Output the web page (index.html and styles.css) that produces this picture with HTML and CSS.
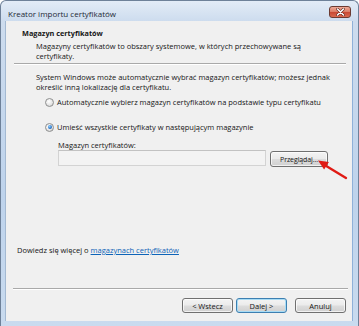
FILE: index.html
```html
<!DOCTYPE html>
<html lang="pl">

<head>
    <meta charset="UTF-8" />
    <title>Kreator importu certyfikatów</title>
    <link rel="stylesheet" href="styles.css">
</head>
<body>
    <div class="window">
        <div class="titlebar">
            <span class="title">Kreator importu certyfikatów</span>
            <button class="close-button">
                <svg width="9" height="8" viewBox="0 0 9 8">
                    <path d="M1.5 1l6 6M7.5 1l-6 6" stroke="#5a2018" stroke-width="2.6" stroke-linecap="round"></path>
                    <path d="M1.5 1l6 6M7.5 1l-6 6" stroke="#ffffff" stroke-width="1.6" stroke-linecap="round"></path>
                </svg>
            </button>
        </div>

        <div class="client">
            <div class="header">
                <h2>Magazyn certyfikatów</h2>
                <p>Magazyny certyfikatów to obszary systemowe, w których przechowywane są<br>certyfikaty.</p>
            </div>
            <div class="separator"></div>

            <div class="options">
                <p class="intro">System Windows może automatycznie wybrać magazyn certyfikatów; możesz jednak<br>określić inną lokalizację dla certyfikatu.</p>
                <label class="radio">
                    <span class="radio-circle"></span>
                    Automatycznie wybierz magazyn certyfikatów na podstawie typu certyfikatu
                </label>
                <label class="radio radio-second">
                    <span class="radio-circle checked"></span>
                    Umieść wszystkie certyfikaty w następującym magazynie
                </label>
                <div class="store">
                    <div class="store-label">Magazyn certyfikatów:</div>
                    <div class="store-row">
                        <div class="store-input"></div>
                        <button class="button browse-button">Przeglądaj...</button>
                        <svg class="arrow" width="45" height="30" viewBox="0 0 45 30">
                            <line x1="15" y1="9.3" x2="36" y2="22" stroke="#e01a14" stroke-width="2.4" stroke-linecap="round"></line>
                            <polygon points="8,4.5 14.1,13.6 18.9,6" fill="#e01a14"></polygon>
                        </svg>
                    </div>
                </div>
            </div>

            <p class="learn-more">Dowiedz się więcej o <a href="#">magazynach certyfikatów</a></p>

            <div class="footer">
                <div class="separator"></div>
                <div class="button-group">
                    <button class="button">&lt; Wstecz</button>
                    <button class="button next-button">Dalej &gt;</button>
                    <button class="button cancel-button">Anuluj</button>
                </div>
            </div>
        </div>
    </div>
</body>
</html>
```

FILE: styles.css
```css
body {
    margin: 0;
    padding: 0;
    background: #ffffff;
    font-family: 'Open Sans', sans-serif;
    font-size: 7.5px;
    color: #161616;
}

.window {
    width: 359px;
    height: 326px;
    box-sizing: border-box;
    border: 1px solid #6e8199;
    border-bottom: none;
    border-radius: 6px 6px 0 0;
    padding: 0 6px 5px 5px;
    display: flex;
    flex-direction: column;
    background: linear-gradient(180deg, #e3ecf7 0, #cddcee 20px, #bed3ec 60%, #c9dbef 100%);
}

.titlebar {
    height: 20px;
    display: flex;
    align-items: flex-start;
    justify-content: space-between;
}

.title {
    margin: 7px 0 0 2px;
    line-height: 12px;
    font-size: 8px;
    color: #1e2a36;
}

.close-button {
    width: 22px;
    height: 12px;
    margin: 5px 1px 0 0;
    padding: 0;
    border: 1px solid #6b3b32;
    border-radius: 3px;
    background: linear-gradient(180deg, #eeaa98 0, #dd7f68 45%, #c94a34 55%, #d9694f 100%);
    display: flex;
    align-items: center;
    justify-content: center;
}

.client {
    flex-grow: 1;
    display: flex;
    flex-direction: column;
    background: #f0f0f0;
    box-shadow: -1px 0 0 #a3b9d2, 1px 0 0 #8fb1d9;
}

.header {
    padding: 7px 0 2px 16px;
}

.header h2 {
    margin: 0 0 3px;
    font-size: 7.3px;
    font-weight: 700;
    line-height: 10px;
}

.header p {
    margin: 0 0 0 14px;
    line-height: 10px;
}

.separator {
    height: 0;
    border-top: 1px solid #a9a9a9;
    border-bottom: 1px solid #ffffff;
    margin: 0 6px 0 8px;
}

.options {
    padding-left: 30px;
}

.intro {
    margin: 7px 0 0;
    line-height: 10px;
}

.radio {
    display: flex;
    align-items: center;
    margin: 5px 0 0 9px;
    line-height: 10px;
}

.radio-second {
    margin-top: 15px;
}

.radio-circle {
    width: 7px;
    height: 7px;
    margin-right: 3px;
    border: 1px solid #8e8f8f;
    border-radius: 50%;
    background: radial-gradient(circle at 40% 35%, #ffffff 0, #e6e6e6 55%, #c9c9c9 100%);
    position: relative;
}

.radio-circle.checked::after {
    content: '';
    position: absolute;
    left: 1.5px;
    top: 1.5px;
    width: 4px;
    height: 4px;
    border-radius: 50%;
    background: radial-gradient(circle at 40% 35%, #8fd0ff 0, #2a74c8 60%, #144a8c 100%);
}

.store {
    margin: 8px 0 0 22px;
}

.store-label {
    line-height: 10px;
}

.store-row {
    display: flex;
    align-items: flex-start;
    position: relative;
}

.store-input {
    width: 206px;
    height: 14px;
    border: 1px solid #d3d3d3;
    border-top-color: #c2c2c2;
    background: #f3f3f3;
}

.arrow {
    position: absolute;
    left: 252px;
    top: 6px;
}

.button {
    height: 16px;
    padding: 0;
    border: 1px solid #707070;
    border-radius: 3px;
    background: linear-gradient(180deg, #f4f4f4 0, #ebebeb 48%, #dddddd 52%, #d0d0d0 100%);
    font-family: 'Open Sans', sans-serif;
    font-size: 7.5px;
    color: #161616;
    white-space: nowrap;
    box-shadow: inset 0 0 0 1px rgba(255, 255, 255, 0.7);
}

.browse-button {
    width: 58px;
    margin: 1px 0 0 4px;
    font-size: 7px;
    letter-spacing: -0.1px;
}

.learn-more {
    margin: 78px 0 0 11px;
    line-height: 10px;
}

.learn-more a {
    color: #0e64b8;
}

.footer {
    margin-top: auto;
    padding-bottom: 8px;
}

.footer .separator {
    margin: 0 4px 0 7px;
}

.button-group {
    display: flex;
    justify-content: flex-end;
    margin-top: 8px;
    padding-right: 6px;
}

.button-group .button {
    width: 51px;
    height: 15px;
}

.next-button {
    margin-left: 3px;
    border-color: #3c7fb1;
    box-shadow: inset 0 0 0 1px #a8dcf5;
}

.cancel-button {
    margin-left: 8px;
}
```
